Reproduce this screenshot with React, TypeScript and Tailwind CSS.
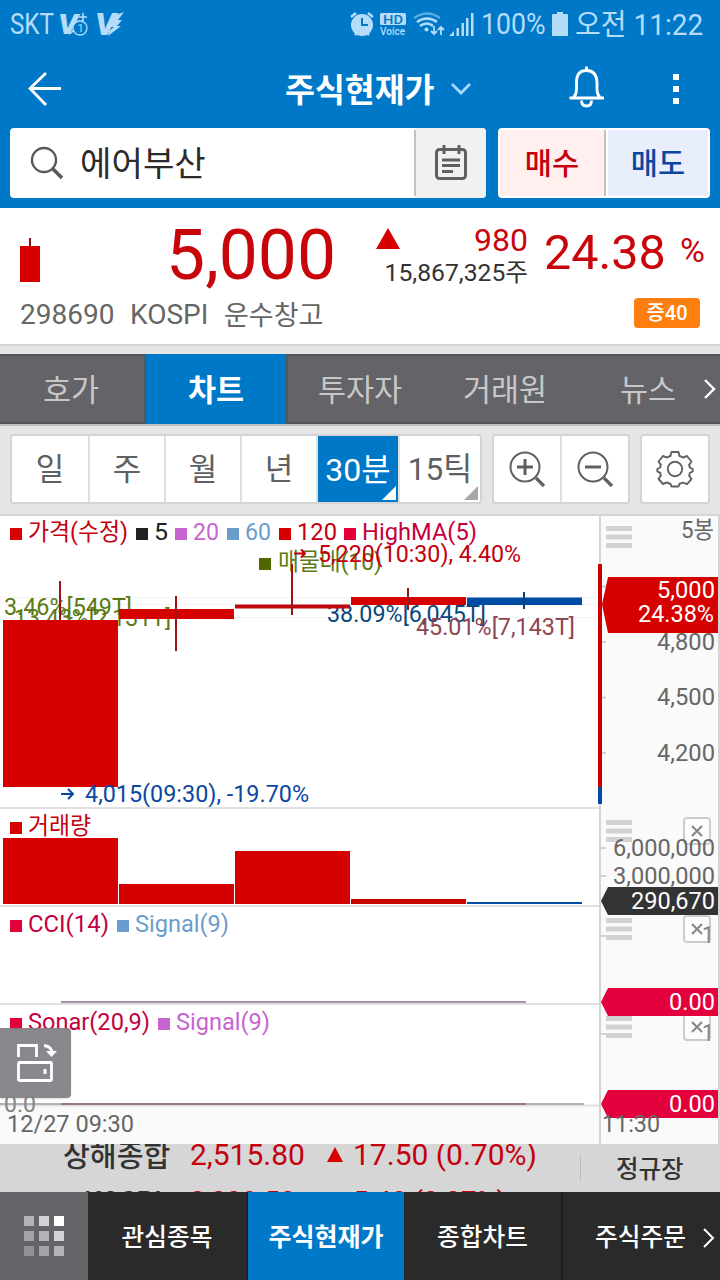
import React from 'react';

const legendTop = [
  { x: 10, label: '가격(수정)', tx: 28, w: 100, color: '#c4000c', box: '#d60000' },
  { x: 136, label: '5', tx: 154, w: 14, color: '#222222', box: '#222222' },
  { x: 175, label: '20', tx: 193, w: 26, color: '#c764cf', box: '#c764cf' },
  { x: 227, label: '60', tx: 245, w: 26, color: '#6a9ccd', box: '#6a9ccd' },
  { x: 279, label: '120', tx: 297, w: 40, color: '#c4000c', box: '#d60000' },
  { x: 344, label: 'HighMA(5)', tx: 362, w: 115, color: '#c4003c', box: '#e4003c' },
];

const volumes = [
  { x: 3, y: 838, color: '#d60000' },
  { x: 119, y: 884, color: '#d60000' },
  { x: 235, y: 851, color: '#d60000' },
  { x: 351, y: 899, color: '#c80000' },
  { x: 467, y: 902, color: '#004ca5' },
];

type LabelProps = {
  x: number;
  y: number;
  w: number;
  color: string;
  children: string;
};

const Label: React.FC<LabelProps> = ({ x, y, w, color, children }) => (
  <text x={x} y={y} textLength={w} lengthAdjust="spacingAndGlyphs" fill={color}>
    {children}
  </text>
);

const StatusBar: React.FC = () => (
  <div className="flex h-[50px] items-center text-[29px] text-[#b5dcf8]">
    <svg className="shrink-0" width="481" height="50" fill="#b5dcf8">
      <text x="10" y="34" textLength="44" lengthAdjust="spacingAndGlyphs">SKT</text>
      <text x="58" y="34" fontSize="27" fontWeight="900" fontStyle="italic" textLength="20" lengthAdjust="spacingAndGlyphs">V</text>
      <path d="M69 34l11-8h-4l6-5M79 17h8M83 13v8" stroke="#b5dcf8" strokeWidth="1.6" fill="none" />
      <circle cx="80" cy="28" r="7" fill="#0078c8" stroke="#b5dcf8" strokeWidth="1.3" />
      <text x="77.5" y="32" fontSize="11">1</text>
      <text x="95" y="35" fontSize="31" fontWeight="900" fontStyle="italic" textLength="21" lengthAdjust="spacingAndGlyphs">V</text>
      <path d="M111 17l13-5-6 8h4l-5 6h4l-13 10 1-5 5-4h-4l4-6h-5z" />
      {/* alarm */}
      <circle cx="362" cy="25" r="11" />
      <path d="M351 17l5-4M373 17l-5-4M355 35l3-3M369 35l-3-3" stroke="#b5dcf8" strokeWidth="2.6" />
      <path d="M362 18v7h6" stroke="#0078c8" strokeWidth="2" fill="none" />
      {/* hd voice */}
      <rect x="380" y="13" width="26" height="12" rx="1.5" />
      <text x="383" y="23.5" fontSize="12" fontWeight="500" fill="#0078c8" textLength="20" lengthAdjust="spacingAndGlyphs">HD</text>
      <text x="380" y="34.5" fontSize="10.5" fontWeight="500" textLength="25" lengthAdjust="spacingAndGlyphs">Voice</text>
      {/* wifi */}
      <g fill="none" stroke="#b5dcf8" strokeWidth="2.4">
        <path d="M414 18q13-9 26 0" opacity=".5" />
        <path d="M417 22q10-7 20 0" />
        <path d="M420 26q7-5 13 0" />
        <path d="M434 26v8m-3-3l3 3 3-3M441 35v-8m-3 3l3-3 3 3" strokeWidth="1.8" />
      </g>
      <circle cx="426.500" cy="29.500" r="2" />
      <path d="M449 36l5-5v5zM456.500 28h2.500v8h-2.500zM461.500 23h2.500v13h-2.500zM466 18h2.500v18h-2.500zM471 13h2.500v23h-2.500z" />
    </svg>
    <span className="w-[71px] shrink-0">
      <span className="inline-block origin-left scale-x-[0.92]">100%</span>
    </span>
    <svg className="-mt-1" width="17" height="25" fill="#b5dcf8">
      <path d="M5 1h6v2h4q1 0 1 1v20q0 1-1 1H1q-1 0-1-1V4q0-1 1-1h4z" />
    </svg>
    <span className="ml-1.5 origin-left scale-x-[0.965] whitespace-nowrap pt-0.5">오전 11:22</span>
  </div>
);

const Header: React.FC = () => (
  <header className="h-[208px] bg-[#0078c8]">
    <StatusBar />
    <div className="flex h-[78px] items-center text-white">
      <svg className="ml-7" width="34" height="36" fill="none" stroke="currentColor" strokeWidth="2.800">
        <path d="M18 2L2 17.500 18 34M2 17.500h31" />
      </svg>
      <h1 className="ml-[223px] w-[150px] whitespace-nowrap pt-1 text-[32.500px] font-bold">주식현재가</h1>
      <svg className="ml-[15px]" width="22" height="14" fill="none" stroke="#a6d9fb" strokeWidth="2.800">
        <path d="M2 2l9 9 9-9" />
      </svg>
      <svg className="-mt-1 ml-[97px]" width="38" height="44" fill="none" stroke="currentColor" strokeWidth="2.800">
        <path d="M.5 33h34.500M4.500 32.500q3-3 3-8v-7q0-12 10-12T28 17.500v7q0 5 3 8M17.500 1.500v4M12.500 35.500q0 5.500 5 5.500t5-5.500" />
      </svg>
      <svg className="ml-[66px]" width="6" height="32" fill="currentColor">
        <path d="M0 1h6v6H0zM0 13h6v6H0zM0 25h6v6H0z" />
      </svg>
    </div>
    <div className="flex h-[70px] gap-3 px-2.5">
      <div className="flex w-[476px] overflow-hidden rounded bg-white">
        <div className="flex w-[404px] items-center">
          <svg className="ml-5" width="34" height="34" fill="none" stroke="#58595b" strokeWidth="2.400">
            <circle cx="14" cy="14" r="12" />
            <path d="M23 23l9 9" strokeWidth="3.500" />
          </svg>
          <span className="ml-[16px] pt-[3px] text-[34.200px] text-[#2b2b2b]">에어부산</span>
        </div>
        <div className="my-0.5 w-0.5 bg-[#c2c2c2]" />
        <div className="flex flex-1 items-center justify-center bg-[#f1f1f1]">
          <svg width="34" height="38" fill="none" stroke="#606062" strokeWidth="3">
            <rect x="2.500" y="5.500" width="29" height="29" rx="3" />
            <path d="M10 1v9M25 1v9M8 16h18M8 21.500h18M8 27.500h11" />
          </svg>
        </div>
      </div>
      <div className="flex w-[212px] rounded bg-white p-0.5 text-[29.500px] font-medium">
        <div className="flex w-[104px] items-center justify-center bg-[#ffefee] pt-0.5 text-[#c4000c]">매수</div>
        <div className="mr-0.5 w-0.5 bg-[#c2c2c2]" />
        <div className="flex flex-1 items-center justify-center bg-[#e8eefb] pt-0.5 text-[#0a48a0]">매도</div>
      </div>
    </div>
  </header>
);

const Quote: React.FC = () => (
  <section className="h-[136px] bg-white text-[#c8050b]">
    <div className="flex h-[84px]">
      <svg className="ml-5 mt-[30px]" width="20" height="44">
        <path d="M10 0v9" stroke="#8c1010" strokeWidth="2" />
        <path d="M0 8h20v36H0z" fill="#d60000" />
      </svg>
      <div className="mt-[6px] w-[296px] text-right text-[69.500px] leading-[84px]">5,000</div>
      <svg className="ml-[40px] mt-[20px] shrink-0" width="24" height="21">
        <path d="M12 0l12 21H0z" fill="#d60000" />
      </svg>
      <div className="-ml-[22px] mt-[14px] w-[150px] shrink-0 text-right">
        <div className="text-[32px] leading-[36px]">980</div>
        <div className="whitespace-nowrap text-[24.700px] leading-[29px] text-[#333333]">15,867,325주</div>
      </div>
      <div className="ml-4 mt-[17px] w-[136px] text-[48.500px] leading-[56px]">24.38</div>
      <div className="mt-[22px] text-[34px] leading-[40px]">%</div>
    </div>
    <div className="flex h-[46px] items-center pl-5 text-[28px] text-[#666666]">
      <span className="w-[110px]">298690</span>
      <span className="w-[94px]">KOSPI</span>
      <span className="pt-0.5 text-[27px]">운수창고</span>
      <span className="-mt-1 ml-auto mr-5 flex h-[30px] w-[66px] items-center justify-center rounded bg-[#ff7f0e] text-[20px] font-medium text-white">증40</span>
    </div>
  </section>
);

const tabStyle = 'flex items-center justify-center border-y-2 border-[#555458] pt-[3px]';

const Tabs: React.FC = () => (
  <nav className="mt-[8px] flex h-[70px] bg-[#646367] text-[30.500px] text-[#c8c8ca]">
    <div className={`${tabStyle} w-[146px] border-r-2 pr-0.5`}>호가</div>
    <div className="flex w-[140px] items-center justify-center bg-[#0078c8] pt-[3px] font-bold text-white">차트</div>
    <div className={`${tabStyle} w-[146px] border-l-2`}>투자자</div>
    <div className={`${tabStyle} w-[146px]`}>거래원</div>
    <div className={`${tabStyle} flex-1`}>
      <span className="ml-2">뉴스</span>
      <svg className="-mr-[30px] -mt-[3px] ml-[27px]" width="13" height="20" fill="none" stroke="white" strokeWidth="2.400">
        <path d="M2 1l9 9-9 9" />
      </svg>
    </div>
  </nav>
);

const Toolbar: React.FC = () => (
  <div className="flex h-[92px] border-b-2 border-t-2 border-b-[#d4d4d4] border-t-[#c0c0c2] px-2.5 pt-2 text-[31px] text-[#606062]">
    <div className="flex h-[70px] w-[472px] divide-x-2 divide-[#e0e0e0] rounded border-2 border-[#d4d4d4] bg-white">
      <div className="flex w-[78px] items-center justify-center pt-0.5">일</div>
      <div className="flex w-[76px] items-center justify-center pt-0.5">주</div>
      <div className="flex w-[76px] items-center justify-center pt-0.5">월</div>
      <div className="flex w-[76px] items-center justify-center pt-0.5">년</div>
      <div className="relative flex w-[82px] items-center justify-center bg-[#0078c8] pt-0.5 text-[32px] text-white">
        30분
        <svg className="absolute bottom-0.5 right-0.5" width="14" height="14" fill="white"><path d="M14 0v14H0z" /></svg>
      </div>
      <div className="relative flex flex-1 items-center justify-center pt-0.5 text-[31.500px]">
        15틱
        <svg className="absolute bottom-0.5 right-0.5" width="14" height="14" fill="#a8a8aa"><path d="M14 0v14H0z" /></svg>
      </div>
    </div>
    <div className="ml-2.5 flex h-[70px] w-[138px] divide-x-2 divide-[#e0e0e0] rounded border-2 border-[#d4d4d4] bg-white">
      <div className="flex flex-1 items-center justify-center">
        <svg width="38" height="38" fill="none" stroke="#606062" strokeWidth="2">
          <circle cx="17" cy="17" r="14.500" />
          <path d="M9 17h16M17 9v16" strokeWidth="3" />
          <path d="M28 28l8 8" strokeWidth="3.200" />
        </svg>
      </div>
      <div className="flex flex-1 items-center justify-center">
        <svg width="38" height="38" fill="none" stroke="#606062" strokeWidth="2">
          <circle cx="17" cy="17" r="14.500" />
          <path d="M9 17h16" strokeWidth="3" />
          <path d="M28 28l8 8" strokeWidth="3.200" />
        </svg>
      </div>
    </div>
    <div className="ml-2.5 flex h-[70px] w-[70px] items-center justify-center rounded border-2 border-[#d4d4d4] bg-white">
      <svg width="38" height="38" fill="none" stroke="#606062" strokeWidth="1.900" strokeLinejoin="round">
        <circle cx="19" cy="19" r="7.200" />
        <path d="M15.500 2h7l1 4q2 .5 3.500 1.600l4-1.600 4.500 5.500-2.400 3.400q.6 1.600.6 2.600l3 1.500v2.500l-3 1.500q0 1.400-.6 2.600l2.400 3.600-4.500 5-4-1.600Q25 33.500 23.500 33.800l-1 2.700h-7l-1-2.700q-2-.4-3.500-1.400l-4 1.600-4.500-5 2.400-3.600q-.6-1.200-.6-2.600l-3-1.500V19l3-1.500q0-1.400.6-2.600L2.500 11.500 7 6l4 1.600Q12.500 6.500 14.500 6z" />
      </svg>
    </div>
  </div>
);

const PricePlot: React.FC = () => (
  <svg width="600" height="628" viewBox="0 516 600 628" fontSize="23.500" className="block bg-white">
    <path d="M0 597.500h600M0 604.500h600M0 617.500h600" stroke="#f4f4f6" />
    <path d="M0 1106h600v38H0z" fill="#fafafa" />
    <path d="M0 808h600M0 906h600M0 1004h600M0 1105.500h600" stroke="#e0e0e0" strokeWidth="2" />

    {legendTop.map((item) => (
      <g key={item.label}>
        <rect x={item.x} y="528" width="12" height="12" fill={item.box} />
        <Label x={item.tx} y={540} w={item.w} color={item.color}>{item.label}</Label>
      </g>
    ))}
    <path d="M259 558h12v12h-12z" fill="#4e6700" />
    <Label x={278} y={570} w={104} color="#5c7a14">매물대(10)</Label>

    <Label x={4} y={615} w={128} color="#5c7a14">3.46%[549T]</Label>
    <Label x={14} y={626} w={157} color="#5c7a14">13.43%[2,131T]</Label>
    <Label x={327} y={622} w={159} color="#0a487c">38.09%[6,045T]</Label>
    <Label x={416} y={635} w={159} color="#8e4650">45.01%[7,143T]</Label>

    {/* candles */}
    <path d="M60 581v206M176 596v55M292 564v51M408 588v22" stroke="#9c1414" strokeWidth="2" />
    <path d="M3 620h115v167H3zM119 609h115v10H119zM351 597h115v8H351z" fill="#d60000" />
    <path d="M235 604.500h115v4H235z" fill="#c00810" />
    <path d="M467 597.500h115v7.500H467z" fill="#004ca5" />
    <path d="M524 592v17" stroke="#0a4284" strokeWidth="2" />
    <path d="M176 606v20M292 602v12M408 597v13" stroke="#9c1414" strokeWidth="2" />

    <path d="M294 553.500h11m-4-4l4 4-4 4" stroke="#c4000c" strokeWidth="2" fill="none" />
    <Label x={318} y={562} w={203} color="#c4000c">5,220(10:30), 4.40%</Label>
    <path d="M61 794h12m-5-5l5 5-5 5" stroke="#0a48a0" strokeWidth="2" fill="none" />
    <Label x={85} y={802} w={224} color="#0a48a0">4,015(09:30), -19.70%</Label>

    {/* volume */}
    <path d="M10 822h12v12H10z" fill="#d60000" />
    <Label x={28} y={834} w={63} color="#c4000c">거래량</Label>
    {volumes.map((bar) => (
      <rect key={bar.x} x={bar.x} y={bar.y} width="115" height={904 - bar.y} fill={bar.color} />
    ))}

    {/* CCI */}
    <path d="M10 920h12v12H10z" fill="#e4003c" />
    <Label x={28} y={932} w={81} color="#c4003c">CCI(14)</Label>
    <path d="M117 920h12v12h-12z" fill="#6a9ccd" />
    <Label x={135} y={932} w={94} color="#6a9ccd">Signal(9)</Label>
    <path d="M61 1002h465" stroke="#a994ac" strokeWidth="2" />

    {/* Sonar */}
    <path d="M10 1018h12v12H10z" fill="#e4003c" />
    <Label x={28} y={1030} w={122} color="#c4003c">Sonar(20,9)</Label>
    <path d="M158 1018h12v12h-12z" fill="#c764cf" />
    <Label x={176} y={1030} w={94} color="#c764cf">Signal(9)</Label>
    <path d="M0 1104h584" stroke="#b4b4b6" strokeWidth="2" />
    <path d="M61 1104h465" stroke="#96748c" strokeWidth="2" />
    <Label x={4} y={1112} w={32} color="#858587">0.0</Label>
    <Label x={7} y={1132} w={127} color="#666666">12/27 09:30</Label>
  </svg>
);

const PanelButtons: React.FC<{ y: number }> = ({ y }) => (
  <g>
    <path d={`M606 ${y + 2.5}h26m-26 8.500h26m-26 8.500h26`} stroke="#d2d2d2" strokeWidth="5" />
    <rect x="684" y={y - 2} width="26" height="26" rx="3" fill="#fcfcfc" stroke="#cccccc" strokeWidth="2" />
    <path d={`M692 ${y + 6}l10 10m0-10l-10 10`} stroke="#858587" strokeWidth="2" />
  </g>
);

const AxisTag: React.FC<{ y: number; color: string; text: string; x: number; w: number }> = ({ y, color, text, x, w }) => (
  <g>
    <path d={`M601 ${y + 14}l7-14h110v28H608z`} fill={color} />
    <Label x={x} y={y + 22} w={w} color="white">{text}</Label>
  </g>
);

const PriceAxis: React.FC = () => (
  <svg width="122" height="628" viewBox="598 516 122 628" fontSize="23.500" className="-ml-0.5 block shrink-0">
    <path d="M600 516h120v628H600z" fill="#fafafa" />
    <path d="M600 516v628M719 516v628" stroke="#d4d4d4" strokeWidth="2" />
    <path d="M601 586.500h5M601 642h5M601 697.500h5M601 753h5M601 848h5M601 876h5M601 936h5M601 1034h5" stroke="#c4c4c4" strokeWidth="1.500" />
    <path d="M606 528.500h26m-26 8.500h26m-26 8.500h26" stroke="#d2d2d2" strokeWidth="5" />
    <path d="M598 564h4v223h-4z" fill="#c80000" />
    <path d="M598 787h4v17h-4z" fill="#004ca5" />
    <Label x={681} y={538} w={33} color="#666666">5봉</Label>
    <Label x={657} y={650} w={58} color="#666666">4,800</Label>
    <Label x={657} y={705} w={58} color="#666666">4,500</Label>
    <Label x={657} y={761} w={58} color="#666666">4,200</Label>
    <path d="M602 604.500l6-27.500h110v56H608z" fill="#d60000" />
    <Label x={657} y={598} w={58} color="white">5,000</Label>
    <Label x={638} y={622} w={76} color="white">24.38%</Label>

    <PanelButtons y={820} />
    <Label x={613} y={856} w={102} color="#666666">6,000,000</Label>
    <Label x={613} y={884} w={102} color="#666666">3,000,000</Label>
    <AxisTag y={887} color="#333333" text="290,670" x={631} w={84} />
    <PanelButtons y={918} />
    <Label x={702} y={943} w={12} color="#858587">1</Label>
    <PanelButtons y={1016} />
    <AxisTag y={988} color="#e4003c" text="0.00" x={669} w={46} />
    <Label x={702} y={1041} w={12} color="#858587">1</Label>
    <AxisTag y={1090} color="#e4003c" text="0.00" x={669} w={46} />
    <Label x={602} y={1132} w={58} color="#666666">11:30</Label>
  </svg>
);

const Chart: React.FC = () => (
  <section className="relative flex h-[628px]">
    <PricePlot />
    <PriceAxis />
    <button className="absolute left-0 top-[512px] h-[70px] w-[71px] rounded-r bg-[#838287]/95 shadow">
      <svg width="71" height="70" fill="none" stroke="white" strokeWidth="2.800">
        <rect x="18.500" y="34.500" width="33" height="18" rx="1" />
        <path d="M18.500 29V17.500h18V29M44 17.500q8 1 8 8" />
        <path d="M46 23h11l-5.500 6z" fill="white" stroke="none" />
        <path d="M45 41v5" strokeWidth="3" />
      </svg>
    </button>
  </section>
);

const Ticker: React.FC = () => (
  <div className="flex h-[48px] items-center overflow-hidden bg-[#d6d6d6]">
    <div className="h-[48px] w-[580px] overflow-hidden text-[30px] leading-[46px] text-[#c4000c]">
      <div className="-mt-[12px] flex h-[46px] whitespace-nowrap pl-[63px]">
        <span className="w-[127px] pt-px text-[29.200px] font-medium text-[#333333]">상해종합</span>
        <span className="w-[137px]">2,515.80</span>
        <svg className="mt-[15px]" width="16" height="15" fill="#d60000"><path d="M8 0l8 15H0z" /></svg>
        <span className="ml-2.5">17.50 (0.70%)</span>
      </div>
      <div className="mt-px flex h-[46px] whitespace-nowrap pl-[84px] text-[27.500px]">
        <span className="w-[106px] font-medium text-[#333333]">KOSPI</span>
        <span className="w-[163px]">2,028.50</span>
        <span>5.40 (0.27%)</span>
      </div>
    </div>
    <div className="h-6 w-px bg-[#bababa]" />
    <span className="ml-[35px] pt-1 text-[24.500px] font-medium text-[#333333]">정규장</span>
  </div>
);

const BottomBar: React.FC = () => (
  <nav className="flex h-[88px] bg-[#2a2a2a] text-[24.700px] font-medium text-white">
    <div className="flex w-[88px] items-center justify-center bg-[#646367]">
      <div className="grid grid-cols-3 gap-[5px]">
        <i className="size-2.5 bg-[#b4b4b6]" />
        <i className="size-2.5 bg-[#d4d4d6]" />
        <i className="size-2.5 bg-white" />
        <i className="size-2.5 bg-[#a4a4a6]" />
        <i className="size-2.5 bg-[#b4b4b6]" />
        <i className="size-2.5 bg-[#d4d4d6]" />
        <i className="size-2.5 bg-[#939296]" />
        <i className="size-2.5 bg-[#a4a4a6]" />
        <i className="size-2.5 bg-[#b4b4b6]" />
      </div>
    </div>
    <div className="flex w-[160px] items-center justify-center border-r border-[#1d1d1d] pr-px pt-[3px]">관심종목</div>
    <div className="flex w-[156px] items-center justify-center bg-[#0078c8] pt-[3px] text-[25px] font-bold">주식현재가</div>
    <div className="flex w-[159px] items-center justify-center border-r-2 border-[#1d1d1d] pt-[3px]">종합차트</div>
    <div className="flex flex-1 items-center pl-8 pt-[3px]">
      주식주문
      <svg className="ml-[16px]" width="13" height="20" fill="none" stroke="white" strokeWidth="2">
        <path d="M2 1l9 9-9 9" />
      </svg>
    </div>
  </nav>
);

export default function App() {
  return (
    <div className="h-[1280px] w-[720px] overflow-hidden bg-[#e5e5e5] font-[Roboto,'Noto_Sans_CJK_KR',sans-serif]">
      <Header />
      <Quote />
      <div className="h-0.5 bg-[#d4d4d4]" />
      <Tabs />
      <Toolbar />
      <Chart />
      <Ticker />
      <BottomBar />
    </div>
  );
}
